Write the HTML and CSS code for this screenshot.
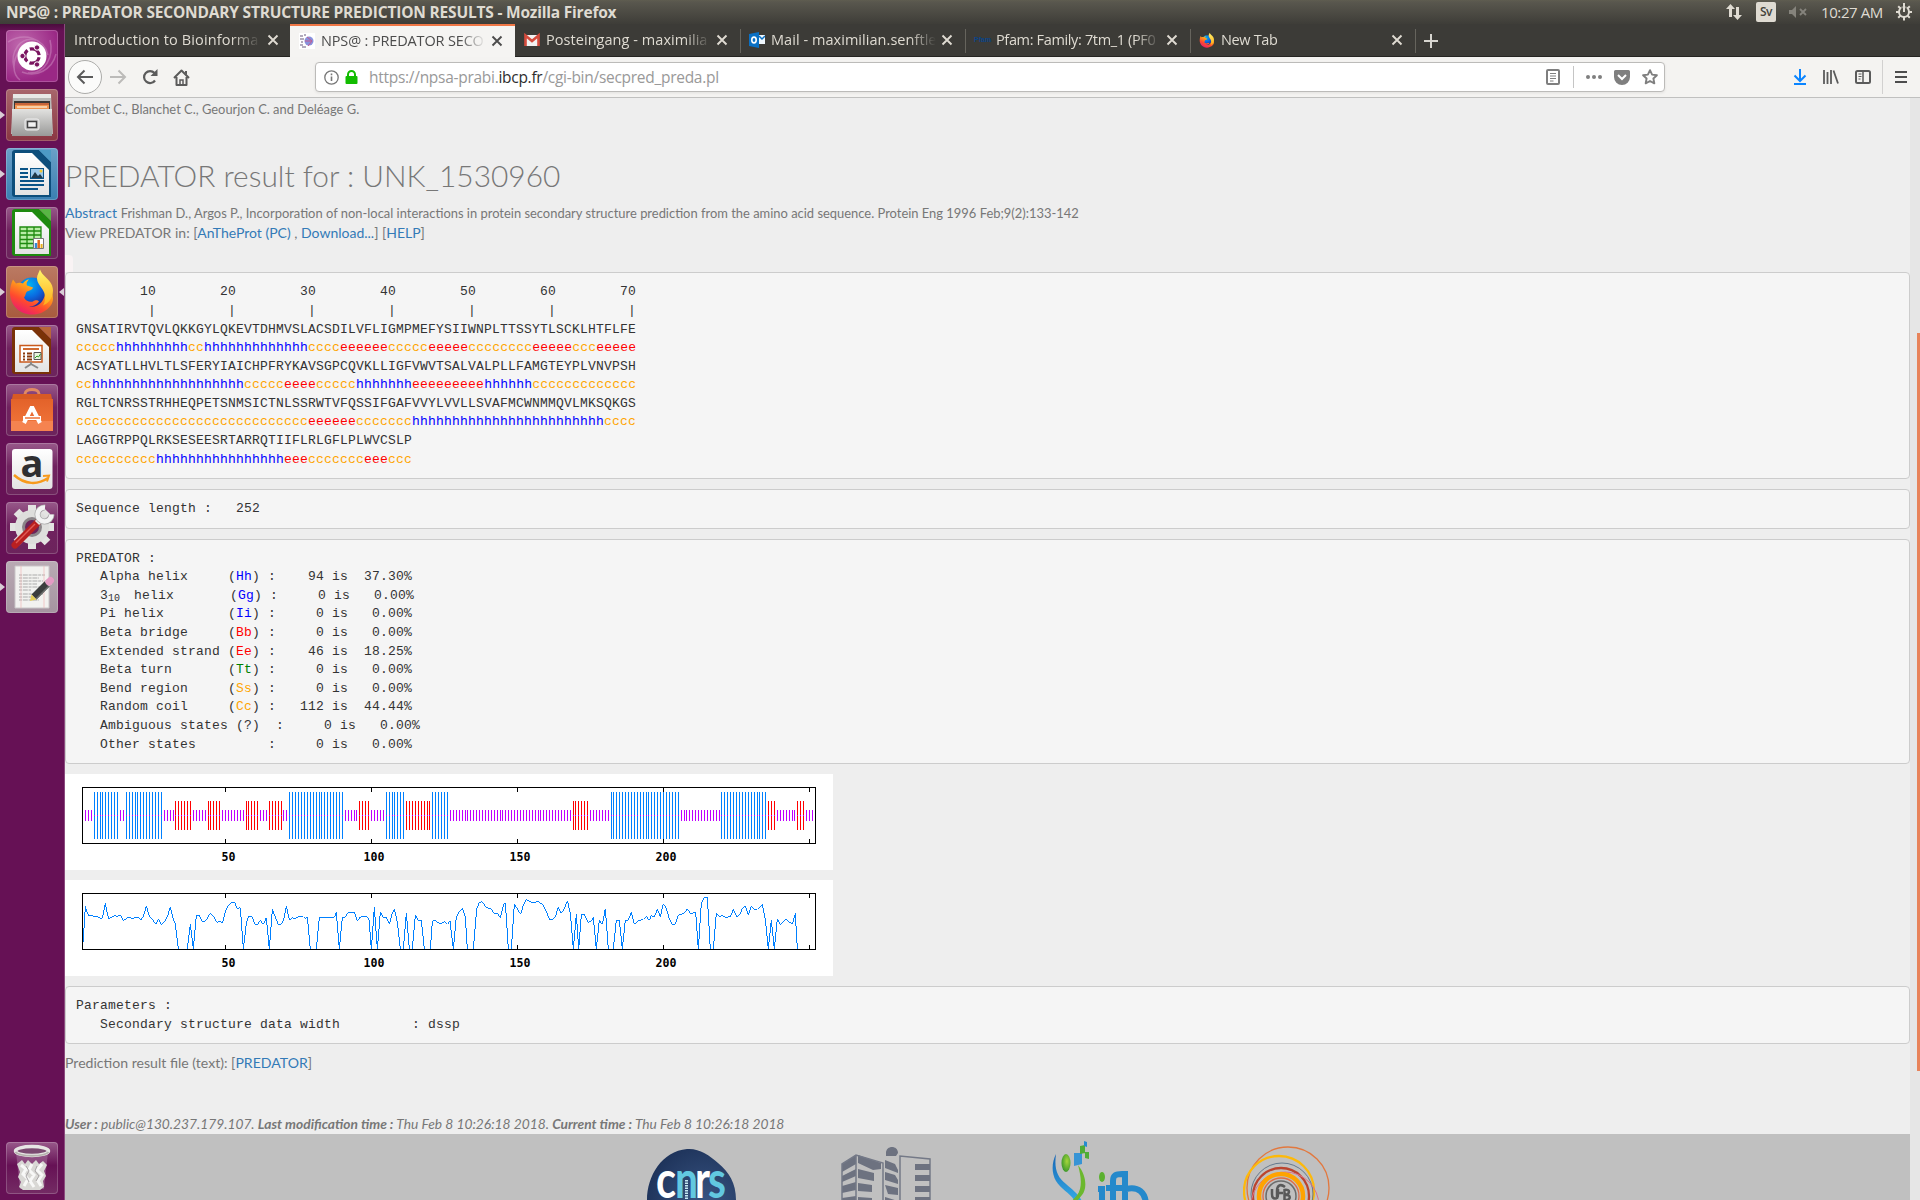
FILE: index.html
```html
<!DOCTYPE html>
<html lang="en">
<head>
<meta charset="utf-8">
<title>NPS@ : PREDATOR SECONDARY STRUCTURE PREDICTION RESULTS</title>
<link rel="stylesheet" href="styles.css">
</head>
<body>
<svg width="0" height="0" class="defs">
  <defs>
    <linearGradient id="fxBody" x1="0.8" y1="0" x2="0.2" y2="1"><stop offset="0" stop-color="#ffe226"/><stop offset=".35" stop-color="#ff9a1c"/><stop offset=".65" stop-color="#ff4a2e"/><stop offset="1" stop-color="#e6147a"/></linearGradient>
    <linearGradient id="fxTail" x1="0" y1="0" x2="0" y2="1"><stop offset="0" stop-color="#fff36b"/><stop offset="1" stop-color="#ffae1a"/></linearGradient>
    <radialGradient id="fxGlobe" cx=".4" cy=".25" r=".8"><stop offset="0" stop-color="#00b5f4"/><stop offset=".5" stop-color="#0a6ae0"/><stop offset="1" stop-color="#22208c"/></radialGradient>
    <linearGradient id="metal" x1="0" y1="0" x2="0" y2="1"><stop offset="0" stop-color="#e2e2e0"/><stop offset="1" stop-color="#999998"/></linearGradient>
    <linearGradient id="bag" x1="0" y1="0" x2="0" y2="1"><stop offset="0" stop-color="#e3622a"/><stop offset="1" stop-color="#f3773b"/></linearGradient>
    <linearGradient id="paper" x1="0" y1="0" x2="0" y2="1"><stop offset="0" stop-color="#fff"/><stop offset="1" stop-color="#e3e3e3"/></linearGradient>
    <radialGradient id="cnrsBlue" cx=".65" cy=".6" r=".7"><stop offset="0" stop-color="#3a5684"/><stop offset="1" stop-color="#1d3259"/></radialGradient>
    <linearGradient id="ifbBlue" x1="0" y1="0" x2="0" y2="1"><stop offset="0" stop-color="#1765b5"/><stop offset="1" stop-color="#37b4ec"/></linearGradient>
    <radialGradient id="ifbGreen" cx=".6" cy=".4" r=".6"><stop offset="0" stop-color="#a5d63c"/><stop offset="1" stop-color="#3f9a2c"/></radialGradient>
    <symbol id="firefox" viewBox="0 0 48 48">
      <circle cx="24" cy="25" r="15" fill="url(#fxGlobe)"/>
      <path d="M5 12c1 1 2 3 3 4 2-1 5-1 7 0 1-2 4-4 6-4-2 2-3 4-2 6 2 1 4 1 6 2-1 3-4 3-6 4-2 2-1 4-3 6 2 4 6 5 9 4 3-2 5-1 6 0-2 3-6 5-10 5 9 2 17-6 16-16 2 2 3 5 3 7 2-4 1-10-1-13 3 3 6 9 6 14C45 39 36 47 24 47 11 47 2 37 2 25c0-5 1-9 3-13z" fill="url(#fxBody)"/>
      <path d="M32 2c-1 3-3 5-3 9 0 7 9 11 8 20 0 3-1 5-2 7 5-2 10-7 10-15 0-7-5-11-8-14-2-2-4-4-5-7z" fill="url(#fxTail)"/>
    </symbol>
    <symbol id="close" viewBox="0 0 12 12"><path d="M1.5 1.5l9 9M10.500 1.500l-9 9" stroke="currentColor" stroke-width="1.9" fill="none"/></symbol>
  </defs>
</svg>

<header class="panel">
  <span class="panel-title">NPS@ : PREDATOR SECONDARY STRUCTURE PREDICTION RESULTS - Mozilla Firefox</span>
  <div class="indicators">
    <svg width="18" height="18" viewBox="0 0 18 18" fill="#dfdbd2"><path d="M5.500 1L1 6h3v8h3V6h3zM12.500 17l4.500-5h-3V4h-3v8H8z"/></svg>
    <span class="lang">Sv</span>
    <svg class="mute" width="18" height="12" viewBox="0 0 18 12" fill="#85837c"><path d="M0 4h3l4-4v12L3 8H0z"/><path d="M11 3l6 6M17 3l-6 6" stroke="#85837c" stroke-width="1.800"/></svg>
    <span class="clock">10:27 AM</span>
    <svg width="16" height="18" viewBox="0 0 16 18"><circle cx="8" cy="9" r="5" fill="none" stroke="#dfdbd2" stroke-width="2"/><path d="M8 0v9M8 14v3.500M0 9h3M13 9h3M2.200 3.200l2.200 2.200M13.800 3.200l-2.200 2.200M2.200 14.800l2.200-2.200M13.800 14.800l-2.200-2.200" stroke="#dfdbd2" stroke-width="2"/><path d="M6 1v6M10 1v6" stroke="#45443d"/></svg>
  </div>
</header>

<div class="desktop">
<nav class="launcher">
  <div class="tile dash"><svg viewBox="0 0 52 52"><g fill="none" stroke="#d59ac9" stroke-opacity=".45" stroke-width="1.500"><path d="M2 12C18 2 38 8 42 25M8 38C4 22 14 6 30 10M44 10c4 16-4 34-22 33M50 24c-4 16-20 24-34 18M14 50C6 44 6 30 14 20"/></g><circle cx="26" cy="26" r="14.500" fill="#fff"/><circle cx="26" cy="26" r="7.200" fill="none" stroke="#7a1460" stroke-width="3.200" stroke-dasharray="12.500 2.600" stroke-dashoffset="-1.300"/><g fill="#7a1460" stroke="#fff"><circle cx="16.500" cy="26" r="2.700"/><circle cx="31" cy="17.500" r="2.700"/><circle cx="31" cy="34.500" r="2.700"/></g></svg></div>
  <div class="tile files running"><svg viewBox="0 0 52 52"><path d="M7 5h38l2 40H5z" fill="#b9b9b7"/><path d="M7 5h38v4H7z" fill="#e8e8e6"/><path d="M8 12h36v10H8z" fill="#3b3634"/><path d="M9 14h34v4H9z" fill="#c8653a"/><path d="M9 16h34v6H9z" fill="#ef9350"/><path d="M11 18h30" stroke="#fbe3c4" stroke-width="1.500"/><path d="M6 20h40v27H6z" fill="url(#metal)"/><rect x="19" y="30" width="14" height="11" rx="2" fill="#c9c9c8" stroke="#eee"/><rect x="21.500" y="32.500" width="9" height="6" fill="#f2f2f2" stroke="#444" stroke-width="1.500"/></svg></div>
  <div class="tile writer running"><svg viewBox="0 0 52 52"><path d="M9 2h24l12 12v35H9a3 3 0 0 1-3-3V5a3 3 0 0 1 3-3z" fill="#0d4e7b"/><path d="M33 2h12v12z" fill="#4d9ac5"/><path d="M9 5h17l17 17v25H9z" fill="url(#paper)"/><path d="M14 21h8M14 25h8M14 29h8M14 33h24M14 37h24M14 41h18" stroke="#0b5487" stroke-width="2"/><rect x="24.500" y="20.500" width="13" height="10" fill="#9dc8e8" stroke="#0b5487"/><path d="M25 30l4-6 3 4 2-2 3 4z" fill="#203848"/><circle cx="35" cy="23" r="1.500" fill="#f4c832"/></svg></div>
  <div class="tile plain"><svg viewBox="0 0 52 52"><path d="M9 2h24l12 12v35H9a3 3 0 0 1-3-3V5a3 3 0 0 1 3-3z" fill="#1e8a0f"/><path d="M33 2h12v12z" fill="#59b645"/><path d="M9 5h17l17 17v25H9z" fill="url(#paper)"/><path d="M14 20h21v21H14z" fill="#b9eda6"/><path d="M14 20h21v21H14zM14 24h21M14 28h21M14 32.500h21M14 36.500h21M21 20v21M28 20v21" fill="none" stroke="#1e8a0f" stroke-width="1.300"/><path d="M27.500 31.500h10v10h-10z" fill="#fff" stroke="#777"/><path d="M30 41v-5" stroke="#3589d5" stroke-width="2.500"/><path d="M32.700 41v-8" stroke="#e4691b" stroke-width="2.500"/><path d="M35.600 41v-4" stroke="#e8b020" stroke-width="2"/></svg></div>
  <div class="tile fox running focused"><svg viewBox="0 0 52 52"><use href="#firefox" x="2" y="1" width="48" height="49"/></svg></div>
  <div class="tile plain"><svg viewBox="0 0 52 52"><path d="M9 2h24l12 12v35H9a3 3 0 0 1-3-3V5a3 3 0 0 1 3-3z" fill="#7a3208"/><path d="M33 2h12v12z" fill="#b8663a"/><path d="M9 5h17l17 17v25H9z" fill="url(#paper)"/><path d="M14 20.500h22v16.500H14z" fill="#fff" stroke="#c95a1c" stroke-width="1.500"/><path d="M17 24h16" stroke="#d06a30" stroke-width="2"/><path d="M17 28.500h2M17 31.500h2M17 34.500h2M21 28.500h5M21 31.500h5M21 34.500h5" stroke="#8a3a0c" stroke-width="1.800"/><path d="M28 27.500h7v7h-7z" fill="#e8f6e0" stroke="#555"/><path d="M29 33l2-2 1.500 1 2-3" stroke="#2a9a20" fill="none"/><path d="M25 37v2l-6 4M25 39l7 4" stroke="#888" stroke-width="2" fill="none"/></svg></div>
  <div class="tile plain"><svg viewBox="0 0 52 52"><path d="M19 15V10c0-6 14-6 14 0v5" fill="none" stroke="#e08a64" stroke-width="3"/><path d="M7 10h38l2 10H5z" fill="#d75a24"/><path d="M5 15h42v32H5z" fill="url(#bag)"/><path d="M5 37h42v10H5z" fill="#f58350"/><path d="M18 39l8-16 8 16M17 34h18" stroke="#fff" stroke-width="4" fill="none" stroke-linejoin="bevel"/><path d="M19 34h15" stroke="#ec7238" stroke-width="1.500"/></svg></div>
  <div class="tile plain"><svg viewBox="0 0 52 52"><rect x="6" y="6" width="40.500" height="40" rx="3" fill="url(#paper)"/><text x="26" y="33.500" text-anchor="middle" class="amazon-a">a</text><path d="M8 32c11 10 24 10 34 3" fill="none" stroke="#f79a1c" stroke-width="2.500"/><path d="M37 33l6-.500-2 6" fill="none" stroke="#f79a1c" stroke-width="2"/></svg></div>
  <div class="tile plain"><svg viewBox="0 0 52 52"><g stroke="#e4e4e2" stroke-width="8"><path d="M26 3v44M4 25h44M10.500 9.500l31 31M41.500 9.500l-31 31"/></g><circle cx="26" cy="25" r="17" fill="#dededc"/><circle cx="26" cy="25" r="10" fill="#8b8488"/><circle cx="26" cy="25" r="7" fill="#6c2359"/><path d="M9 43l22-22" stroke="#b91f20" stroke-width="7" stroke-linecap="round"/><path d="M10 41l19-19" stroke="#e25a55" stroke-width="1.500"/><path d="M31 21l5-5" stroke="#e9e9e9" stroke-width="6"/><path d="M39 5.500a7 7 0 1 0 6.500 7" fill="none" stroke="#aaa" stroke-width="6"/><path d="M39 5.500a7 7 0 1 0 6.500 7" fill="none" stroke="#f3f3f3" stroke-width="4.500"/></svg></div>
  <div class="tile gedit running"><svg viewBox="0 0 52 52"><path d="M9 5h34v42H9z" fill="#f2f2f0" stroke="#c9c6c8"/><path d="M13 14h26M13 17h20M13 20h24M13 23h18M13 26h22M13 29h12M13 33h24M13 36h18M13 39h20" stroke="#aaa" stroke-width="1" stroke-dasharray="3 .8 5 .8"/><path d="M15 5v42M38 5v42" stroke="#f0b7b7" stroke-width=".7"/><path d="M28 36l14-14" stroke="#3b3d3d" stroke-width="7"/><path d="M30 38l14-14" stroke="#696c6b" stroke-width="1.500"/><path d="M41 23l2.500-2.500" stroke="#ccc" stroke-width="7"/><path d="M43 21l1.500-1.500" stroke="#e49bc4" stroke-width="7" stroke-linecap="round"/><path d="M24 40l1.500-6.500 5 5z" fill="#e5cf58"/></svg></div>
  <div class="tile trash"><svg viewBox="0 0 52 52"><path d="M10 10h32l-4 37H14z" fill="#b78bae" fill-opacity=".4"/><path d="M11 22l5-4 3 4 3-4 4 4 4-4 3 4 4-3 4 4-3 6 2 5-3 5 1 6-4 3H17l-4-3 2-5-3-5 2-5z" fill="#d9d8d5"/><path d="M15 23l5 4-3 5 5 5-4 7M26 22l-3 6 5 5-4 6 4 6M36 22l-5 6 5 5-4 6 3 5" fill="none" stroke="#f8f8f7" stroke-width="3"/><path d="M20 24l3 5-3 5 3 6M31 24l-2 5 4 5-3 5" fill="none" stroke="#a9a5a7" stroke-width="1"/><ellipse cx="26" cy="9" rx="16.500" ry="4.500" fill="#7b4a71" stroke="#e7e6e4" stroke-width="3.500"/><path d="M9.500 10c4 5 29 5 33 0" fill="none" stroke="#b5b2ae" stroke-width="2"/></svg></div>
</nav>

<main class="browser">
  <div class="tabs">
    <div class="tab first"><span class="label">Introduction to Bioinforma</span><svg class="x"><use href="#close"/></svg></div>
    <div class="tab active"><svg class="fav" viewBox="0 0 16 16"><path d="M0 0h16v16H0z" fill="#fff"/><path d="M1 3h3M5 2h2M1 6h4M2 9h2M1 12h3M3 14h4" stroke="#9a90a8" stroke-width="1.500"/><circle cx="10" cy="8" r="4.500" fill="#8892dd"/><path d="M8 4l5 4-4 5M6 8h6" stroke="#c45a8f" fill="none"/></svg><span class="label">NPS@ : PREDATOR SECO</span><svg class="x"><use href="#close"/></svg></div>
    <div class="tab plainstart"><svg class="fav" viewBox="0 0 16 16"><path d="M1 3h14v11H1z" fill="#f2f2f2"/><path d="M1.500 14V3.500L8 9l6.500-5.500V14" fill="none" stroke="#d54b3d" stroke-width="2.600"/></svg><span class="label loose">Posteingang - maximilia</span><svg class="x"><use href="#close"/></svg></div>
    <div class="tab"><svg class="fav" viewBox="0 0 16 16"><path d="M0 2l10-2v16L0 14z" fill="#0a70c4"/><path d="M10 3h6v9h-6z" fill="#eef6fc"/><path d="M10 4l3 3 3-3" fill="none" stroke="#0a70c4" stroke-width="1.500"/><ellipse cx="5" cy="8" rx="2.200" ry="2.900" fill="none" stroke="#fff" stroke-width="1.600"/></svg><span class="label loose">Mail - maximilian.senftle</span><svg class="x"><use href="#close"/></svg></div>
    <div class="tab"><span class="fav pfam">Pfam</span><span class="label">Pfam: Family: 7tm_1 (PF0</span><svg class="x"><use href="#close"/></svg></div>
    <div class="tab"><svg class="fav"><use href="#firefox"/></svg><span class="label">New Tab</span><svg class="x"><use href="#close"/></svg></div>
    <div class="newtab"><svg width="16" height="16" viewBox="0 0 16 16"><path d="M8 1v14M1 8h14" stroke="#d8d6d0" stroke-width="2"/></svg></div>
  </div>

  <div class="toolbar">
    <span class="back"><svg width="18" height="16" viewBox="0 0 18 16"><path d="M17 8H2M8.500 1.500L2 8l6.500 6.500" fill="none" stroke="#5b5b5b" stroke-width="2"/></svg></span>
    <svg class="fwd" width="18" height="16" viewBox="0 0 18 16"><path d="M1 8h15M9.500 1.500L16 8l-6.500 6.500" fill="none" stroke="#bcbbb9" stroke-width="2"/></svg>
    <svg class="reload" width="16" height="16" viewBox="0 0 16 16"><path d="M13 11.500A6 6 0 1 1 12.500 4" fill="none" stroke="#5b5b5b" stroke-width="2.200"/><path d="M15.500 0v7h-7z" fill="#5b5b5b"/></svg>
    <svg class="home" width="17" height="17" viewBox="0 0 17 17"><path d="M1 9L8.500 1.500 16 9M3.500 8v8h10V8" fill="none" stroke="#5b5b5b" stroke-width="2" stroke-linejoin="round"/><path d="M7 16v-5h3v5z" fill="none" stroke="#5b5b5b" stroke-width="1.500"/><path d="M12 2h2v4l-2-2z" fill="#5b5b5b"/></svg>
    <div class="urlbar">
      <svg width="15" height="15" viewBox="0 0 15 15"><circle cx="7.500" cy="7.500" r="6.700" fill="none" stroke="#777" stroke-width="1.300"/><path d="M7.500 6.500V11M7.500 3.500v1.800" stroke="#777" stroke-width="1.600"/></svg>
      <svg class="lock" width="13" height="14" viewBox="0 0 13 14"><path d="M3 7V4.500a3.500 3.500 0 0 1 7 0V7" fill="none" stroke="#12bc00" stroke-width="2"/><rect x=".5" y="6" width="12" height="8" rx="1" fill="#12bc00"/></svg>
      <span class="url">https://npsa-prabi.<b>ibcp.fr</b>/cgi-bin/secpred_preda.pl</span>
      <svg class="reader" width="14" height="16" viewBox="0 0 14 16"><rect x="1" y="1" width="12" height="14" rx="1" fill="none" stroke="#7f7f7f" stroke-width="2"/><path d="M4 4.500h6M4 7h6M4 9.500h6M4 12h3.500" stroke="#7f7f7f"/></svg>
      <span class="vsep"></span>
      <svg class="dots" width="16" height="4" viewBox="0 0 16 4" fill="#7f7f7f"><circle cx="2" cy="2" r="2"/><circle cx="8" cy="2" r="2"/><circle cx="14" cy="2" r="2"/></svg>
      <svg class="pocket" width="16" height="15" viewBox="0 0 16 15"><path d="M1.500 0h13A1.500 1.500 0 0 1 16 1.500V7A8 8 0 0 1 0 7V1.500A1.500 1.500 0 0 1 1.500 0z" fill="#7f7f7f"/><path d="M4 5l4 4 4-4" fill="none" stroke="#fff" stroke-width="2"/></svg>
      <svg class="star" width="16" height="16" viewBox="0 0 16 16"><path d="M8 1.200l2.100 4.400 4.800.6-3.500 3.300.9 4.800L8 12l-4.300 2.300.9-4.800L1.100 6.200l4.800-.6z" fill="none" stroke="#7f7f7f" stroke-width="1.900" stroke-linejoin="round"/></svg>
    </div>
    <div class="tools">
      <svg width="14" height="16" viewBox="0 0 14 16"><path d="M7 0v11M1.500 6.500L7 12l5.500-5.500M1 15h12" fill="none" stroke="#0a84ff" stroke-width="2"/></svg>
      <svg width="16" height="14" viewBox="0 0 16 14"><path d="M1 0v14M4.500 2v12M8 0v14M10.500 .5L15 13.500" stroke="#5b5b5b" stroke-width="1.800"/></svg>
      <svg width="16" height="14" viewBox="0 0 16 14"><rect x="1" y="1" width="14" height="12" rx="1.500" fill="none" stroke="#5b5b5b" stroke-width="2"/><path d="M8 1v12" stroke="#5b5b5b" stroke-width="1.500"/><path d="M3.500 4h3M3.500 6.500h3M3.500 9h2" stroke="#5b5b5b"/></svg>
      <span class="vsep tall"></span>
      <svg width="12" height="12" viewBox="0 0 12 12"><path d="M0 1h12M0 6h12M0 11h12" stroke="#4d4d4d" stroke-width="2"/></svg>
    </div>
  </div>

  <div class="viewport">
    <article class="page">
      <p class="authors">Combet C., Blanchet C., Geourjon C. and Deléage G.</p>
      <h2>PREDATOR result for : UNK_1530960</h2>
      <p class="abstract"><a>Abstract</a> <small>Frishman D., Argos P., Incorporation of non-local interactions in protein secondary structure prediction from the amino acid sequence. Protein Eng 1996 Feb;9(2):133-142</small></p>
      <p class="view">View PREDATOR in: [<a>AnTheProt (PC)</a> , <a>Download...</a>] [<a>HELP</a>]</p>
      <div class="stub"></div>
<pre>
        10        20        30        40        50        60        70
         |         |         |         |         |         |         |
GNSATIRVTQVLQKKGYLQKEVTDHMVSLACSDILVFLIGMPMEFYSIIWNPLTTSSYTLSCKLHTFLFE
<i>ccccc</i><b>hhhhhhhhh</b><i>cc</i><b>hhhhhhhhhhhhh</b><i>cccc</i><em>eeeeee</em><i>ccccc</i><em>eeeee</em><i>cccccccc</i><em>eeeee</em><i>ccc</i><em>eeeee</em>
ACSYATLLHVLTLSFERYIAICHPFRYKAVSGPCQVKLLIGFVWVTSALVALPLLFAMGTEYPLVNVPSH
<i>cc</i><b>hhhhhhhhhhhhhhhhhhh</b><i>ccccc</i><em>eeee</em><i>ccccc</i><b>hhhhhhh</b><em>eeeeeeeee</em><b>hhhhhh</b><i>ccccccccccccc</i>
RGLTCNRSSTRHHEQPETSNMSICTNLSSRWTVFQSSIFGAFVVYLVVLLSVAFMCWNMMQVLMKSQKGS
<i>ccccccccccccccccccccccccccccc</i><em>eeeeee</em><i>ccccccc</i><b>hhhhhhhhhhhhhhhhhhhhhhhh</b><i>cccc</i>
LAGGTRPPQLRKSESEESRTARRQTIIFLRLGFLPLWVCSLP
<i>cccccccccc</i><b>hhhhhhhhhhhhhhhh</b><em>eee</em><i>ccccccc</i><em>eee</em><i>ccc</i></pre>
<pre>Sequence length :   252</pre>
<pre>PREDATOR :
   Alpha helix     (<b>Hh</b>) :    94 is  37.30%
   3<sub>10 </sub> helix       (<b>Gg</b>) :     0 is   0.00%
   Pi helix        (<b>Ii</b>) :     0 is   0.00%
   Beta bridge     (<em>Bb</em>) :     0 is   0.00%
   Extended strand (<em>Ee</em>) :    46 is  18.25%
   Beta turn       (<span class="turn">Tt</span>) :     0 is   0.00%
   Bend region     (<i>Ss</i>) :     0 is   0.00%
   Random coil     (<i>Cc</i>) :   112 is  44.44%
   Ambiguous states (?)  :     0 is   0.00%
   Other states         :     0 is   0.00%</pre>
      <svg class="chart" viewBox="0 0 768 96">
        <g id="bars" shape-rendering="crispEdges"></g>
        <path class="frame" d="M17.500 13.500h733v56h-733zM160.500 14v4M306.500 14v4M452.500 14v4M598.500 14v4M744.500 14v4M160.500 65v4M306.500 65v4M452.500 65v4M598.500 65v4M744.500 65v4"/>
        <g class="axis"><text x="156.500" y="87">50</text><text x="298.500" y="87">100</text><text x="444.500" y="87">150</text><text x="590.500" y="87">200</text></g>
      </svg>
      <svg class="chart" viewBox="0 0 768 96">
        <path class="frame" d="M17.500 13.500h733v56h-733zM160.500 14v4M306.500 14v4M452.500 14v4M598.500 14v4M744.500 14v4M160.500 65v4M306.500 65v4M452.500 65v4M598.500 65v4M744.500 65v4"/>
        <g class="score">
          <path transform="scale(.33333) translate(-15 -330)" d="M70 515L70 505 76 409 80 422 85 436 97 436 103 441 111 438 123 447 128 441 136 400 140 420 146 447 158 440 164 436 170 440 181 436 190 451 205 442 217 445 229 442 236 443 242 451 250 438 259 409 268 438 277 448 287 463 295 448 304 463 313 456 322 440 331 412 338 440 346 463 355 537M382 537L391 462 400 537 409 436 418 436 427 454 436 454 451 430 461 440 470 457 479 454 487 460 496 425 505 406 514 399 523 395 532 416 541 413 550 537 559 460 565 440 575 440 586 463 593 463 601 451 610 463 619 443 628 537 637 418 646 442 655 463 664 463 671 450 679 409 688 450 697 443 706 446 715 440 730 440 736 446 742 442 751 537M769 537L778 442 823 442 829 427 838 537 847 442 855 442 865 427 883 427 892 454 900 442 906 439 922 440 927 448 934 537 943 412 952 537 961 427 970 442 979 442 988 462 997 430 1003 418 1012 456 1021 537M1030 537L1039 430 1048 537M1057 537L1066 436 1075 451 1084 451 1093 537M1111 537L1117 454 1125 451 1138 460 1146 460 1153 454 1162 463 1170 454 1180 537"/>
          <path transform="scale(.33333) translate(1155 -330)" d="M10 537L19 440 28 425 38 416 46 440 52 537M70 537L80 416 88 398 97 395 106 410 124 418 133 430 142 430 151 444 160 406 166 398 175 537M184 537L193 403 202 416 212 433 220 406 229 389 247 398 265 395 280 406 289 425 298 448 307 448 316 440 325 412 334 430 343 416 352 392 361 430 370 537 379 433 386 537 394 433 403 433 414 457 423 454 430 442 439 537 448 451 457 463 466 416 475 537M490 537L499 451 508 451 517 537 526 451 535 451 544 427 553 463 562 454 580 448 589 439 598 451 604 437 613 440 622 418 631 440 640 401 649 415 658 446 667 463 676 463 685 436 703 430 712 416 721 430 737 428 745 537 754 400 763 382 772 382 781 537M790 537L799 430 808 440 817 436 826 442 841 440 850 418 861 440 868 436 877 416 886 409 895 436 904 409 913 418 922 418 937 403 946 448 955 537 964 451 973 537 982 448 991 463 1008 448 1017 457 1028 460 1036 430 1042 537"/>
        </g>
        <g class="axis"><text x="156.500" y="87">50</text><text x="298.500" y="87">100</text><text x="444.500" y="87">150</text><text x="590.500" y="87">200</text></g>
      </svg>
<pre>Parameters :
   Secondary structure data width         : dssp</pre>
      <p class="result">Prediction result file (text): [<a>PREDATOR</a>]</p>
      <p class="user"><b>User :</b> public@130.237.179.107. <b>Last modification time :</b> Thu Feb 8 10:26:18 2018. <b>Current time :</b> Thu Feb 8 10:26:18 2018</p>
      <footer>
        <svg class="cnrs" width="90" height="66" viewBox="0 0 90 66"><path d="M40 15c12-1 22 6 31 14 11 9 18 20 18 37 0 25-20 44-45 44S0 90 0 66c0-24 15-49 40-51z" fill="url(#cnrsBlue)"/><g class="cnrs-text"><text x="9" y="64" textLength="20" lengthAdjust="spacingAndGlyphs" fill="#fff">c</text><text x="28" y="64" textLength="23" lengthAdjust="spacingAndGlyphs" fill="#62c8e0">n</text><text x="48" y="64" textLength="15" lengthAdjust="spacingAndGlyphs" fill="#fff">r</text><text x="61" y="64" textLength="18" lengthAdjust="spacingAndGlyphs" fill="#62c8e0">s</text></g><path d="M39.500 46v20" stroke="#c7e9f3" stroke-width="3" stroke-dasharray="1.500 1"/></svg>
        <svg class="tower" width="90" height="66" viewBox="0 -8 90 66" fill="#6d7280"><path d="M1 22l14-9v9L1 30zM1 34l14-7v7L1 40zM1 44l14-4v8L1 51zM1 56l14-2v7L1 63zM17 13l23 8v6l-8 1-15-7zM17 27l16 4v8l-16-3zM17 41l14 2v7l-14-1zM17 55l14 1v6l-14-1z"/><path d="M1 66V22l14-9 27 8v45M15 13v53M59 66V14l30 3v49" fill="none" stroke="#747987" stroke-width="1.500"/><path d="M45 11c0-8 12-8 12 0l-2 3H45zM44 18l10 4 3 6v3l-13-5zM44 30l10 3 3 5v4l-13-4zM44 43l13 3v7l-10-1zM44 55l13 4v6l-13-3zM74 22h15v6H74zM74 33h15v6H74zM74 44h15v6H74zM74 55h15v6H74z"/></svg>
        <svg class="ifb" width="98" height="66" viewBox="0 -6 98 66"><path d="M4 14c-2 15 1 23 10 30 8 7 15 12 19 24l-8-1C22 54 10 51 4 41-1 32 0 22 4 14z" fill="url(#ifbBlue)"/><path d="M26 25c9 11 9 24 4 30l-9 11h-5c3-6 10-9 12-17 2-8 0-16-2-24z" fill="#6bb82e"/><ellipse cx="14" cy="23" rx="4.500" ry="9" fill="url(#ifbGreen)"/><path d="M22 13l8 0v11l-8 2z" fill="#3794d5"/><path d="M28 6l5-1v8l-5 1zM33 12h4v7l-4-1z" fill="#4fac35"/><path d="M32 1l3 1v5l-3-1z" fill="#258cd0"/><ellipse cx="50" cy="37" rx="3" ry="5" fill="#5bb030"/><g fill="none" stroke="#2589cb" stroke-width="6"><path d="M50 66V47M46 49h7M61 66V41c0-6 3-7 9-7M54 48h18M73 31v35M74 49c12-3 20 3 20 17"/></g></svg>
        <svg class="ucb" width="90" height="66" viewBox="0 0 90 66" fill="none"><ellipse cx="45" cy="54" rx="41" ry="41" stroke="#e2783e" stroke-width="1.300"/><ellipse cx="36" cy="57" rx="35" ry="35" stroke="#fdb90b" stroke-width="2.300"/><circle cx="39" cy="60" r="31" stroke="#65798d"/><circle cx="38" cy="62" r="28" stroke="#bb442e" stroke-width="2.300"/><circle cx="42" cy="72" r="34" stroke="#df7189"/><circle cx="38" cy="62" r="22" stroke="#ffa300" stroke-width="4.500"/><circle cx="38" cy="62" r="18" stroke="#e06c45" stroke-width="1.300"/><circle cx="38" cy="62" r="15" stroke="#6c6c6c" stroke-width="1.500"/><path d="M29 55v5c0 6 6 6 6 0v-5M42 53c-5-4-8-1-8 4v8M35 59h5M41.500 67V56c6-1 6 4 0 5 7-1 7 5 0 5" stroke="#595959" stroke-width="2.500"/></svg>
      </footer>
    </article>
    <div class="scroll"><div class="thumb"></div></div>
  </div>
</main>
</div>
<script src="script.js"></script>
</body>
</html>
```
FILE: styles.css
```css
* { box-sizing: border-box; }
body { margin: 0; width: 1920px; height: 1200px; overflow: hidden; display: flex; flex-direction: column; background: #eee; font-family: "Open Sans", "Noto Sans", sans-serif; }
.defs { position: absolute; }
p, h2 { margin: 0; }

/* top panel */
.panel { height: 24px; flex: none; display: flex; align-items: center; justify-content: space-between; padding: 0 8px 0 6px; background: linear-gradient(#5f5d50 0, #59574e 2px, #3e3d38 24px); color: #dfdbd2; }
.panel-title { font-size: 15.500px; font-weight: 700; letter-spacing: -.2px; white-space: nowrap; line-height: 22px; }
.indicators { display: flex; align-items: center; }
.lang { width: 20px; height: 20px; margin: 0 13px 0 13px; border-radius: 2px; background: #dfdbd2; color: #45443d; font-size: 12px; font-weight: 600; line-height: 20px; text-align: center; letter-spacing: -.5px; }
.mute { margin-right: 14px; }
.clock { width: 62px; margin-right: 13px; font-size: 15px; letter-spacing: -.4px; white-space: nowrap; }

.desktop { flex: 1; min-height: 0; display: flex; }

/* launcher */
.launcher { width: 65px; flex: none; padding: 6px 0 6px 6px; display: flex; flex-direction: column; gap: 7px; background: linear-gradient(#4a0c3d 0, #661155 7px, #661155 100%); border-right: 1px solid #8b4a7e; }
.tile { width: 52px; height: 52px; flex: none; position: relative; border-radius: 4px; box-shadow: inset 0 0 0 1px rgba(255,255,255,.2); }
.tile > svg { width: 52px; height: 52px; display: block; }
.dash { background: radial-gradient(circle at 30% 30%, #c06aae, #9a2885 70%); }
.files { background: linear-gradient(#a8666c, #8a3642); }
.writer { background: linear-gradient(#6ba0c8, #3a7fb2); }
.plain { background: linear-gradient(#98598a 0, #70225f 45%, #6c245c); }
.fox { background: linear-gradient(#bb7a63, #a85b3e); }
.gedit { background: linear-gradient(#b9aab4, #a594a0); }
.trash { margin-top: auto; background: linear-gradient(#98598a 0, #661155 45%, #742c64); }
.running::before, .focused::after { content: ""; position: absolute; top: 22px; border: 4px solid transparent; }
.running::before { left: -6px; border-left: 5px solid #d9cdd6; border-right: 0; }
.focused::after { right: -6px; border-right: 5px solid #d9cdd6; border-left: 0; }
.amazon-a { font: 700 38px "Open Sans", sans-serif; fill: #2f2f31; }

/* tab strip */
.browser { flex: 1; min-width: 0; display: flex; flex-direction: column; }
.tabs { height: 33px; flex: none; display: flex; background: #3c3b37; border-bottom: 1px solid #262522; }
.tab { width: 225px; flex: none; display: flex; align-items: center; padding-left: 9px; color: #dfdbd2; position: relative; }
.tab:not(.first):not(.active):not(.plainstart)::before, .newtab::before { content: ""; position: absolute; left: 0; top: 5px; width: 1px; height: 24px; background: #66645d; }
.tab.active { height: 33px; padding-bottom: 2px; background: #f5f4f2; color: #4c4c4c; border-top: 2px solid #f07746; }
.fav { width: 16px; height: 16px; flex: none; margin-right: 6px; }
.label { width: 165px; overflow: hidden; white-space: nowrap; font-size: 14.5px; letter-spacing: -.35px; line-height: 20px; -webkit-mask-image: linear-gradient(90deg, #000 84%, transparent); mask-image: linear-gradient(90deg, #000 84%, transparent); }
.label.loose { letter-spacing: .05px; }
.active .label { letter-spacing: -.15px; }
.first .label { width: 187px; letter-spacing: .15px; }
.x { width: 12px; height: 12px; flex: none; margin-left: 5px; }
.first .x { margin-left: 6px; }
.pfam { color: #0a4488; font: 700 7px/16px "Liberation Sans", sans-serif; }
.newtab { position: relative; padding: 8px 0 0 8px; }

/* navigation toolbar */
.toolbar { height: 41px; flex: none; display: flex; align-items: center; background: #f4f3f1; border-bottom: 1px solid #c0c0bf; padding: 0 13px 0 3px; }
.back { width: 34px; height: 34px; display: flex; align-items: center; justify-content: center; border: 1px solid #acacaa; border-radius: 50%; background: #fbfbfa; }
.fwd { margin-left: 7px; }
.reload { margin-left: 15px; }
.home { margin-left: 15px; }
.urlbar { width: 1350px; height: 30px; margin-left: 125px; padding: 0 6px 0 8px; display: flex; align-items: center; background: #fff; border: 1px solid #bcbbb9; border-radius: 4px; box-shadow: 0 1px 3px rgba(0,0,0,.08); }
.lock { margin: 0 11px 0 6px; }
.url { flex: 1; font-size: 15.5px; letter-spacing: -.28px; color: #999; white-space: nowrap; }
.url b { font-weight: 400; color: #2e2e2e; }
.vsep { width: 1px; height: 22px; margin: 0 12px 0 13px; background: #c5c5c5; }
.pocket { margin: 0 12px 0 12px; }
.tools { flex: 1; display: flex; align-items: center; justify-content: flex-end; gap: 16px; }
.vsep.tall { height: 34px; margin: 0 -4px 0 -5px; background: #d2d1d0; }

/* page */
.viewport { flex: 1; min-height: 0; display: flex; }
.page { flex: 1; min-width: 0; padding-top: 1px; overflow: hidden; color: #777; font: 14px/20px Lato, sans-serif; white-space: nowrap; }
.page a { color: #337ab7; }
.authors { font-size: 12.900px; }
.abstract { height: 20px; }
.abstract small { font-size: 12.930px; }
h2 { margin: 40px 0 11px; font: 300 29.880px/33px Lato, sans-serif; }
.stub { width: 8px; height: 17px; margin: 12px 0 0; background: #f9f3f4; border-radius: 0 4px 0 0; }
pre { margin: 0 0 10px; padding: 10px 9.500px 9px 10px; background: #f5f5f5; border: 1px solid #ccc; border-radius: 4px; color: #333; font: 13px/18.571px "Liberation Mono", monospace; letter-spacing: .2px; white-space: pre; }
.stub + pre { margin-top: .4px; }
pre b { color: blue; font-weight: 400; }
pre i { color: orange; font-style: normal; }
pre em { color: red; font-style: normal; }
pre .turn { color: green; }
pre sub { font-size: 10px; line-height: 0; position: relative; vertical-align: baseline; bottom: -.2em; letter-spacing: 0; }
.chart { display: block; width: 768px; height: 96px; margin-bottom: 10px; background: #fff; }
.frame { fill: none; stroke: #000; stroke-width: 1; shape-rendering: crispEdges; }
.axis { font: 700 11.6px "DejaVu Sans Mono", monospace; fill: #000; }
.score { fill: none; stroke: #0080ff; stroke-width: 3; shape-rendering: crispEdges; }
.result { margin-top: -1px; font-size: 14.080px; }
.user { margin-top: 41px; font-size: 13.770px; font-style: italic; }
footer { height: 70px; display: flex; margin-top: 0; padding-left: 582px; background: #c0c0c0; }
.tower { margin-left: 104px; }
.ifb { margin-left: 121px; }
.ucb { margin-left: 93px; }
.cnrs-text { font: 700 52px Lato, sans-serif; }
.scroll { width: 10px; flex: none; background: #e6e6e6; }
.thumb { width: 3px; height: 738px; margin: 235px 0 0 7px; background: #e8835a; }
```
FILE: script.js
```js
// Secondary structure assignment as [state, run length]; draws one bar per residue.
const runs = 'c5 h9 c2 h13 c4 e6 c5 e5 c8 e5 c3 e5 c2 h19 c5 e4 c5 h7 e9 h6 c42 e6 c7 h24 c14 h16 e3 c7 e3 c3'.split(' ');
const style = {
  h: { color: '#0080ff', top: 18, height: 47 },
  e: { color: '#ff0000', top: 27, height: 29 },
  c: { color: '#c000ff', top: 36, height: 11 }
};
const bars = document.getElementById('bars');
const rect = (x, y, w, h, fill) => {
  const r = document.createElementNS('http://www.w3.org/2000/svg', 'rect');
  Object.entries({ x, y, width: w, height: h, fill }).forEach(([k, v]) => r.setAttribute(k, v));
  bars.appendChild(r);
};
let residue = 1;
for (const run of runs) {
  const s = style[run[0]];
  for (let n = +run.slice(1); n > 0; n--, residue++) {
    if (residue < 3) continue;
    const x = Math.round(17 + (residue - 2) * 2.92);
    rect(x, s.top, 1, s.height, s.color);
    rect(x, 41, 1, 1, '#c000ff');
  }
}
```
